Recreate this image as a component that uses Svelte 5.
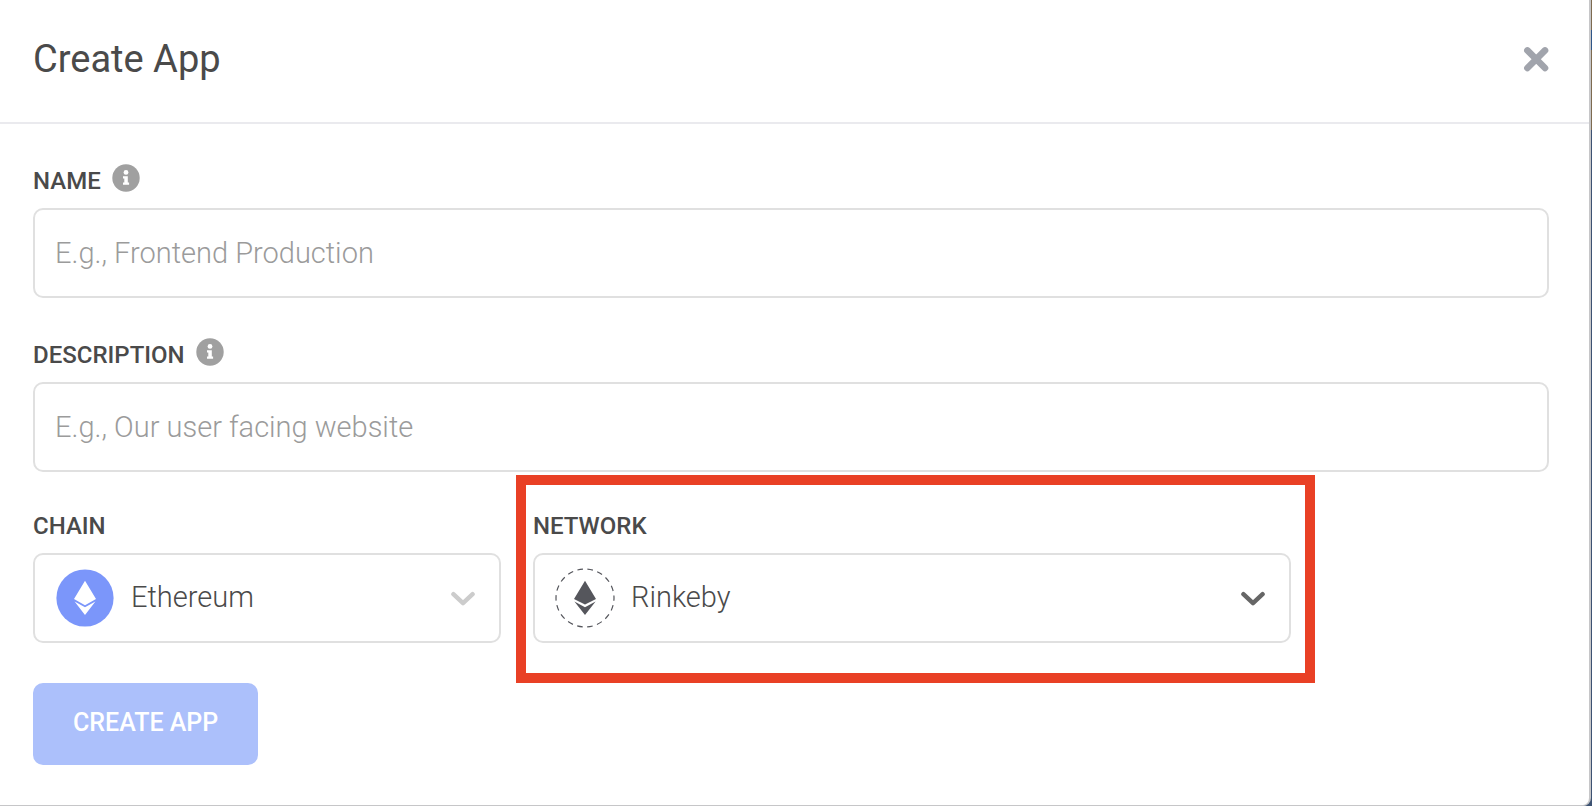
<script>
  let name = $state('');
  let description = $state('');
  let chain = $state('Ethereum');
  let network = $state('Rinkeby');
</script>

{#snippet info()}
  <svg class="info" viewBox="0 0 28 28" aria-hidden="true">
    <circle cx="14" cy="14" r="13.7" fill="#a0a0a0" />
    <circle cx="14" cy="8.4" r="2.4" fill="#fff" />
    <path d="M11 12.2h4.8v6.4h1.3v2.2H11v-2.2h1.3v-4.2H11z" fill="#fff" />
  </svg>
{/snippet}

{#snippet chevron(color)}
  <svg class="chevron" viewBox="0 0 24 16" aria-hidden="true">
    <path d="M2.4 4.2 12 13.1 21.6 4.2" fill="none" stroke={color} stroke-width="4.4" stroke-linecap="round" stroke-linejoin="round" />
  </svg>
{/snippet}

<main class="modal">
  <header>
    <h1>Create App</h1>
    <button class="close" type="button" aria-label="Close">
      <svg viewBox="0 0 26 26" aria-hidden="true">
        <path d="M4.4 4.4 22 22M22 4.4 4.4 22" stroke="#a1a4ac" stroke-width="6.6" stroke-linecap="round" />
      </svg>
    </button>
  </header>

  <form onsubmit={(e) => e.preventDefault()}>
    <div class="field">
      <div class="caption"><label for="name">NAME</label>{@render info()}</div>
      <input id="name" type="text" placeholder="E.g., Frontend Production" bind:value={name} />
    </div>

    <div class="field">
      <div class="caption"><label for="description">DESCRIPTION</label>{@render info()}</div>
      <input id="description" type="text" placeholder="E.g., Our user facing website" bind:value={description} />
    </div>

    <div class="columns">
      <div class="field">
        <div class="caption"><label for="chain">CHAIN</label></div>
        <div class="picker">
          <select id="chain" bind:value={chain}>
            <option>Ethereum</option>
          </select>
          <svg class="coin" viewBox="0 0 60 60" aria-hidden="true">
            <circle cx="30" cy="30" r="28.6" fill="#7b96fa" />
            <path d="M30 12.8 41 30.9 30 37.2 19 30.9zM19.6 33.4 30 39.2 40.4 33.4 30 47z" fill="#fff" />
          </svg>
          {@render chevron('#cccccc')}
        </div>
      </div>

      <div class="field highlighted">
        <div class="caption"><label for="network">NETWORK</label></div>
        <div class="picker">
          <select id="network" bind:value={network}>
            <option>Rinkeby</option>
          </select>
          <svg class="coin" viewBox="0 0 60 60" aria-hidden="true">
            <circle cx="30" cy="30" r="29" fill="none" stroke="#55565c" stroke-width="1.2" stroke-dasharray="5.6 4.52" stroke-dashoffset="2.8" />
            <path d="M30 12.8 41 30.9 30 36.4 19 30.9zM19.4 33.4 30 39.2 40.6 33.4 30 47z" fill="#55565c" />
          </svg>
          {@render chevron('#666666')}
        </div>
      </div>
    </div>

    <button class="submit" type="submit">CREATE APP</button>
  </form>
</main>

<style>
  :global(body) {
    background: linear-gradient(#7d6a50 30px, #2f5587 30px 50px, #7d6a50 50px 130px, #3d5272 130px);
  }

  .modal {
    box-sizing: border-box;
    margin-right: 1px;
    background: #fff;
    border-right: 2px solid #c6c6c8;
    border-bottom: 1px solid #c6c6c8;
    border-bottom-right-radius: 8px;
    color: #4a4a4a;
    font-family: Roboto, sans-serif;
  }

  header {
    display: flex;
    align-items: center;
    justify-content: space-between;
    padding: 35px 40px 39px 33px;
    border-bottom: 2px solid #eaeaee;
  }

  h1 {
    margin: 0;
    font-size: 38px;
    line-height: 48px;
    font-weight: 400;
  }

  .close {
    display: flex;
    padding: 0;
    border: 0;
    background: none;
    cursor: pointer;
  }

  .close svg {
    width: 26px;
    height: 26px;
  }

  form {
    padding: 40px 40px 40px 33px;
  }

  .field {
    margin-bottom: 40px;
  }

  .caption {
    display: flex;
    align-items: flex-end;
    gap: 11px;
    height: 28px;
    margin-bottom: 16px;
  }

  label {
    font-size: 24px;
    line-height: 22px;
    font-weight: 500;
  }

  .info {
    width: 28px;
    height: 28px;
  }

  input,
  select {
    box-sizing: border-box;
    width: 100%;
    height: 90px;
    padding: 0 20px;
    border: 2px solid #e0e0e0;
    border-radius: 10px;
    background: #fff;
    color: #4a4a4a;
    font-family: inherit;
    font-size: 29px;
    font-weight: 300;
  }

  input {
    display: block;
  }

  input::placeholder {
    color: #9b9b9b;
    opacity: 1;
  }

  .columns {
    display: grid;
    grid-template-columns: 468fr 758fr 226fr;
    gap: 32px;
    margin: -3px 0 40px;
  }

  .columns .field {
    margin-bottom: 0;
  }

  .picker {
    display: grid;
    grid-template-columns: 20px 64px 1fr 24px 26px;
    align-items: center;
  }

  .picker select {
    grid-area: 1 / 1 / 2 / -1;
    appearance: none;
    padding: 0 60px 2px 96px;
  }

  .coin,
  .chevron {
    pointer-events: none;
  }

  .coin {
    grid-area: 1 / 2;
    justify-self: center;
    width: 60px;
    height: 60px;
  }

  .chevron {
    grid-area: 1 / 4;
    width: 24px;
    height: 16px;
  }

  .highlighted {
    position: relative;
  }

  .highlighted::after {
    content: '';
    position: absolute;
    inset: -34px -24px -40px -17px;
    border: 10px solid #e94025;
    pointer-events: none;
  }

  .submit {
    display: block;
    height: 82px;
    padding: 0 40px 3px;
    border: 0;
    border-radius: 10px;
    background: #acc0fb;
    color: #fff;
    font-family: inherit;
    font-size: 25px;
    font-weight: 500;
  }
</style>
